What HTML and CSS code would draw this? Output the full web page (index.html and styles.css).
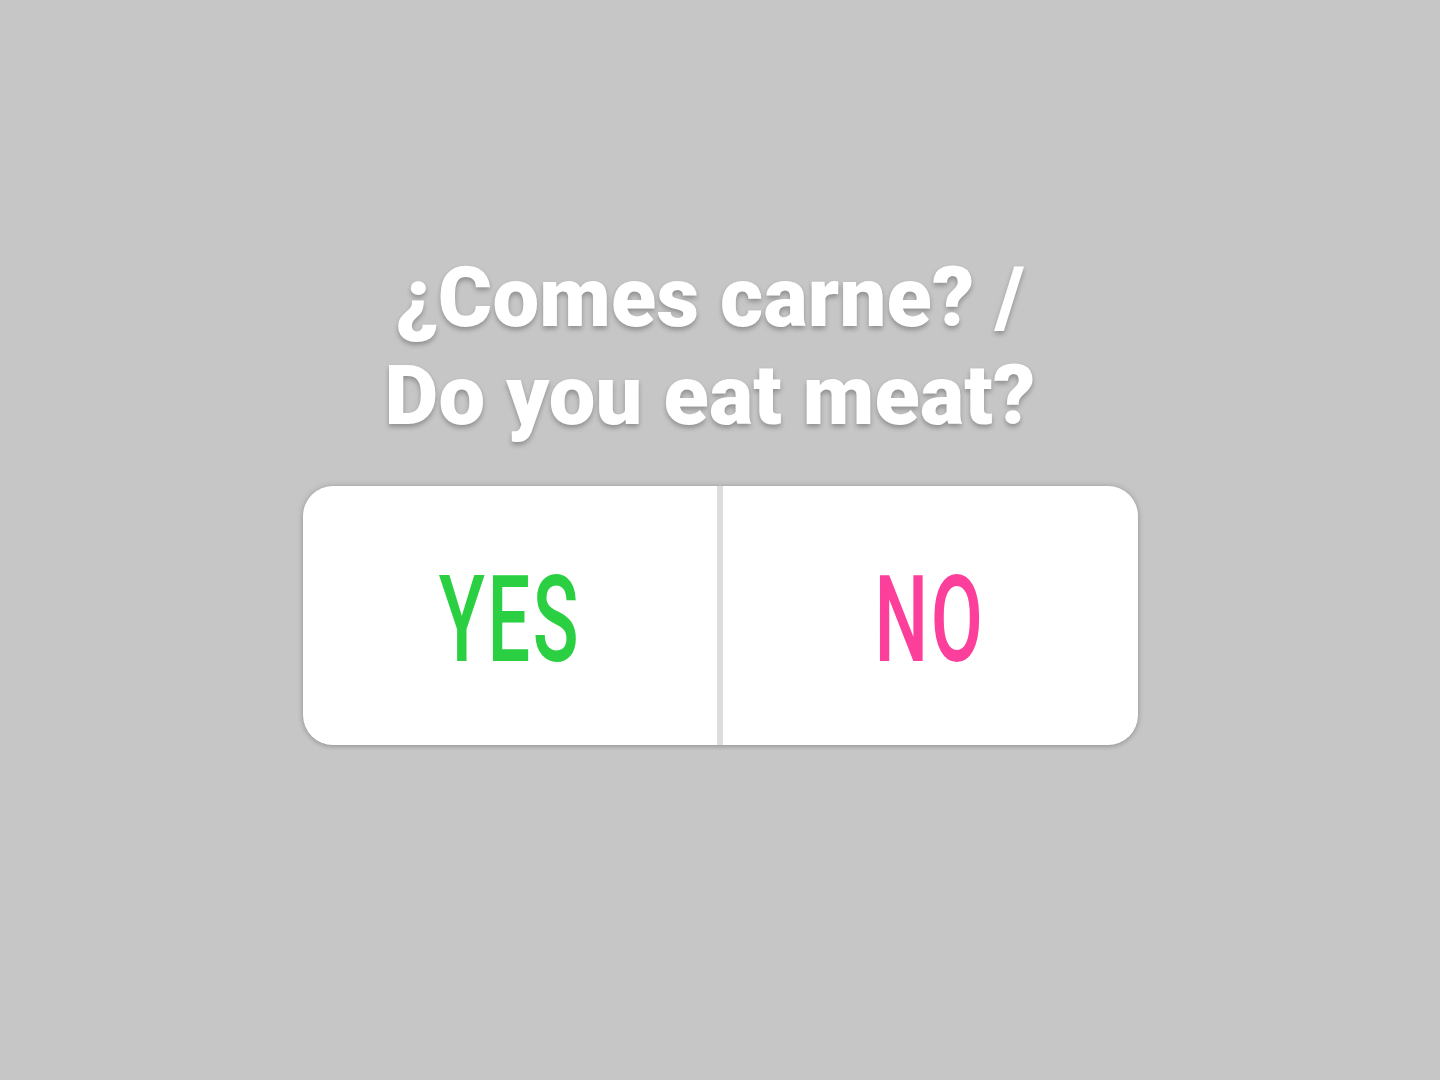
FILE: index.html
```html
<!DOCTYPE html>
<html lang="es">
<head>
<meta charset="utf-8">
<title>Poll</title>
<link rel="stylesheet" href="styles.css">
</head>
<body>
<main class="stage">
  <h1 class="question">¿Comes carne? /<br>Do you eat meat?</h1>
  <div class="poll">
    <div class="option"><span class="label yes">YES</span></div>
    <div class="divider"></div>
    <div class="option"><span class="label no">NO</span></div>
  </div>
</main>
</body>
</html>
```
FILE: styles.css
```css
html, body {
  margin: 0;
  padding: 0;
  background: #c6c6c6;
}
.stage {
  width: 1440px;
  height: 1080px;
  display: flex;
  flex-direction: column;
  align-items: center;
  padding-top: 249px;
  box-sizing: border-box;
}
.question {
  margin: 0 0 41px -20px;
  font-family: Roboto, "Liberation Sans", sans-serif;
  font-weight: 900;
  font-size: 83px;
  line-height: 98px;
  letter-spacing: 0.2px;
  color: #ffffff;
  text-align: center;
  text-shadow: 0 3px 5px rgba(0,0,0,0.28);
}
.poll {
  width: 835px;
  height: 259px;
  background: #ffffff;
  border-radius: 30px;
  display: flex;
  box-shadow: 0 0 6px rgba(0,0,0,0.18), 0 2px 4px rgba(0,0,0,0.12);
  overflow: hidden;
}
.option {
  flex: 1;
  display: flex;
  align-items: center;
  justify-content: center;
  padding-top: 8px;
}
.divider {
  width: 6px;
  background: #dcdcdc;
}
.label {
  display: inline-block;
  font-family: Roboto, "Liberation Sans", sans-serif;
  font-weight: 500;
  font-size: 120px;
  line-height: 1;
  transform: scaleX(0.63);
  letter-spacing: 4px;
}
.yes { color: #2bd042; }
.no { color: #fd3f9c; }
```
